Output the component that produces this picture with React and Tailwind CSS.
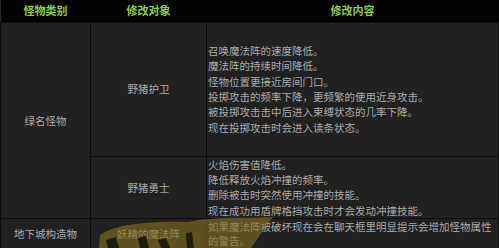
import React from 'react';

const rows = [
    {
        category: '绿名怪物',
        span: 2,
        target: '野猪护卫',
        height: 'h-[134px]',
        lead: 'leading-[15.4px]',
        changes: [
            '召唤魔法阵的速度降低。',
            '魔法阵的持续时间降低。',
            '怪物位置更接近房间门口。',
            '投掷攻击的频率下降，更频繁的使用近身攻击。',
            '被投掷攻击击中后进入束缚状态的几率下降。',
            '现在投掷攻击时会进入读条状态。'
        ]
    },
    {
        target: '野猪勇士',
        height: 'h-[61px]',
        lead: 'leading-[15.4px]',
        changes: [
            '火焰伤害值降低。',
            '降低释放火焰冲撞的频率。',
            '删除被击时突然使用冲撞的技能。',
            '现在成功用盾牌格挡攻击时才会发动冲撞技能。'
        ]
    },
    {
        category: '地下城构造物',
        span: 1,
        target: '妖精的魔法阵',
        height: 'h-[30px]',
        lead: 'leading-[13.5px]',
        changes: ['如果魔法阵被破坏现在会在聊天框里明显提示会增加怪物属性的警告。']
    }
];

// 图片水印（底部的半透明标志）
const Watermark = () => (
    <svg className="absolute left-0 top-0 pointer-events-none" width="499" height="248" viewBox="0 0 499 248">
        <path
            d="M99 248 L100 235 Q110 228 128 225 Q158 220 188 222 L198 220 Q225 217 250 218 L273 217 L262 232 L251 248 Z"
            fill="#85701f"
            opacity="0.62"
        />
        <path d="M106 240 L116 237 L119 248 L108 248 Z" fill="#17150d" opacity="0.9" />
        <path d="M138 238 L146 236 L149 248 L140 248 Z" fill="#17150d" opacity="0.9" />
        <path d="M158 240 L166 238 L170 248 L161 248 Z" fill="#17150d" opacity="0.9" />
        <path d="M186 233 L192 232 L194 248 L187 248 Z" fill="#17150d" opacity="0.85" />
    </svg>
);

const App = () => {
    return (
        <div
            className="relative w-[499px] h-[248px] overflow-hidden bg-[#212121]"
            style={{ fontFamily: '"Noto Sans CJK SC", "Noto Sans", sans-serif' }}
        >
            <table className="w-[499px] border-collapse table-fixed text-[10.5px] leading-[15.4px] text-[#a9a9a9]">
                <colgroup>
                    <col className="w-[90px]" />
                    <col className="w-[116px]" />
                    <col />
                </colgroup>
                <thead>
                    <tr className="h-[22px] bg-[#030303]">
                        <th className="text-[11px] font-bold text-[#8ccc42] text-center">怪物类别</th>
                        <th className="text-[11px] font-bold text-[#8ccc42] text-center">修改对象</th>
                        <th className="text-[11px] font-bold text-[#8ccc42] text-center">修改内容</th>
                    </tr>
                </thead>
                <tbody>
                    {rows.map((r, i) => (
                        <tr key={i} className={r.height}>
                            {r.category && (
                                <td rowSpan={r.span} className="border border-[#0d0d0d] text-center align-middle p-0">
                                    {r.category}
                                </td>
                            )}
                            <td className="border border-[#0d0d0d] text-center align-middle p-0">{r.target}</td>
                            <td className={`border border-[#0d0d0d] align-middle pl-[1px] pr-0 py-0 ${r.lead}`}>
                                {r.changes.map((c, j) => (
                                    <div key={j}>{c}</div>
                                ))}
                            </td>
                        </tr>
                    ))}
                </tbody>
            </table>
            <Watermark />
        </div>
    );
};

export default App;
